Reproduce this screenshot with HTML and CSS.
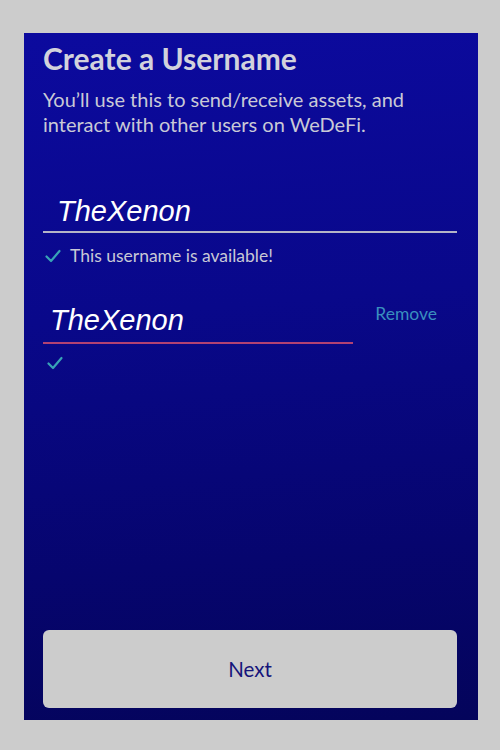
FILE: index.html
```html
<!DOCTYPE html>
<html>
<head>
<meta charset="utf-8">
<link rel="stylesheet" href="styles.css">
</head>
<body>
<div class="screen">
  <h1 class="title">Create a Username</h1>
  <p class="subtitle">You’ll use this to send/receive assets, and interact with other users on WeDeFi.</p>

  <div class="field field-first">
    <div class="input-text input-text-1">TheXenon</div>
    <div class="line line-gray"></div>
  </div>
  <div class="status">
    <svg class="check" viewBox="0 0 16 14" width="16" height="14"><path d="M1.5 7.5 L6 12 L14.5 2" fill="none" stroke="#38a3b6" stroke-width="2.2" stroke-linecap="round" stroke-linejoin="round"/></svg>
    <span class="status-text">This username is available!</span>
  </div>

  <div class="row2">
    <div class="field field-second">
      <div class="input-text input-text-2">TheXenon</div>
      <div class="line line-pink"></div>
      <div class="status status-2">
        <svg class="check" viewBox="0 0 16 14" width="16" height="14"><path d="M1.5 7.5 L6 12 L14.5 2" fill="none" stroke="#38a3b6" stroke-width="2.2" stroke-linecap="round" stroke-linejoin="round"/></svg>
      </div>
    </div>
    <span class="remove">Remove</span>
  </div>

  <div class="spacer"></div>
  <button class="next">Next</button>
</div>
</body>
</html>
```

FILE: styles.css
```css
html, body {
  margin: 0;
  padding: 0;
  background: #cccccc;
}
body {
  width: 500px;
  height: 750px;
  padding-top: 33px;
  padding-left: 24px;
  box-sizing: border-box;
}
.screen {
  width: 454px;
  height: 687px;
  box-sizing: border-box;
  padding: 7px 21px 12px 19px;
  background: linear-gradient(175deg, #0c0a9e 0%, #09088a 40%, #06056e 75%, #04045b 100%);
  display: flex;
  flex-direction: column;
  font-family: Lato, "Noto Sans", sans-serif;
}
.title {
  margin: 0;
  font-size: 30px;
  line-height: 36px;
  font-weight: 700;
  color: #d2d2dc;
}
.subtitle {
  margin: 11px 0 0 0;
  max-width: 380px;
  font-size: 20px;
  line-height: 25px;
  color: #c9c9d6;
}
.field-first {
  margin-top: 57px;
}
.input-text {
  font-family: "Liberation Sans", Arial, sans-serif;
  font-style: italic;
  font-size: 29px;
  line-height: 34px;
  color: #ffffff;
}
.input-text-1 {
  padding-left: 14px;
}
.input-text-2 {
  padding-left: 7px;
}
.line {
  margin-top: 5px;
}
.field-first .line {
  margin-top: 3px;
}
.line-gray {
  height: 2px;
  background: #b4b4c6;
}
.line-pink {
  height: 2px;
  background: #b24272;
}
.status {
  display: flex;
  align-items: center;
  gap: 9px;
  margin-top: 12px;
  padding-left: 2px;
}
.status-text {
  font-size: 17.5px;
  line-height: 22px;
  color: #c8c8d6;
}
.status-2 {
  margin-top: 12px;
  padding-left: 4px;
}
.check {
  display: block;
}
.row2 {
  display: flex;
  justify-content: space-between;
  align-items: flex-start;
  margin-top: 36px;
}
.field-second {
  width: 310px;
}
.remove {
  font-size: 17.5px;
  line-height: 22px;
  color: #3a8fbe;
  margin-right: 20px;
  margin-top: 0;
}
.spacer {
  flex: 1;
}
.next {
  height: 78px;
  width: 100%;
  border: none;
  border-radius: 6px;
  background: #cccccc;
  color: #15147a;
  font-family: Lato, "Noto Sans", sans-serif;
  font-size: 20.5px;
  padding: 0;
}
```
